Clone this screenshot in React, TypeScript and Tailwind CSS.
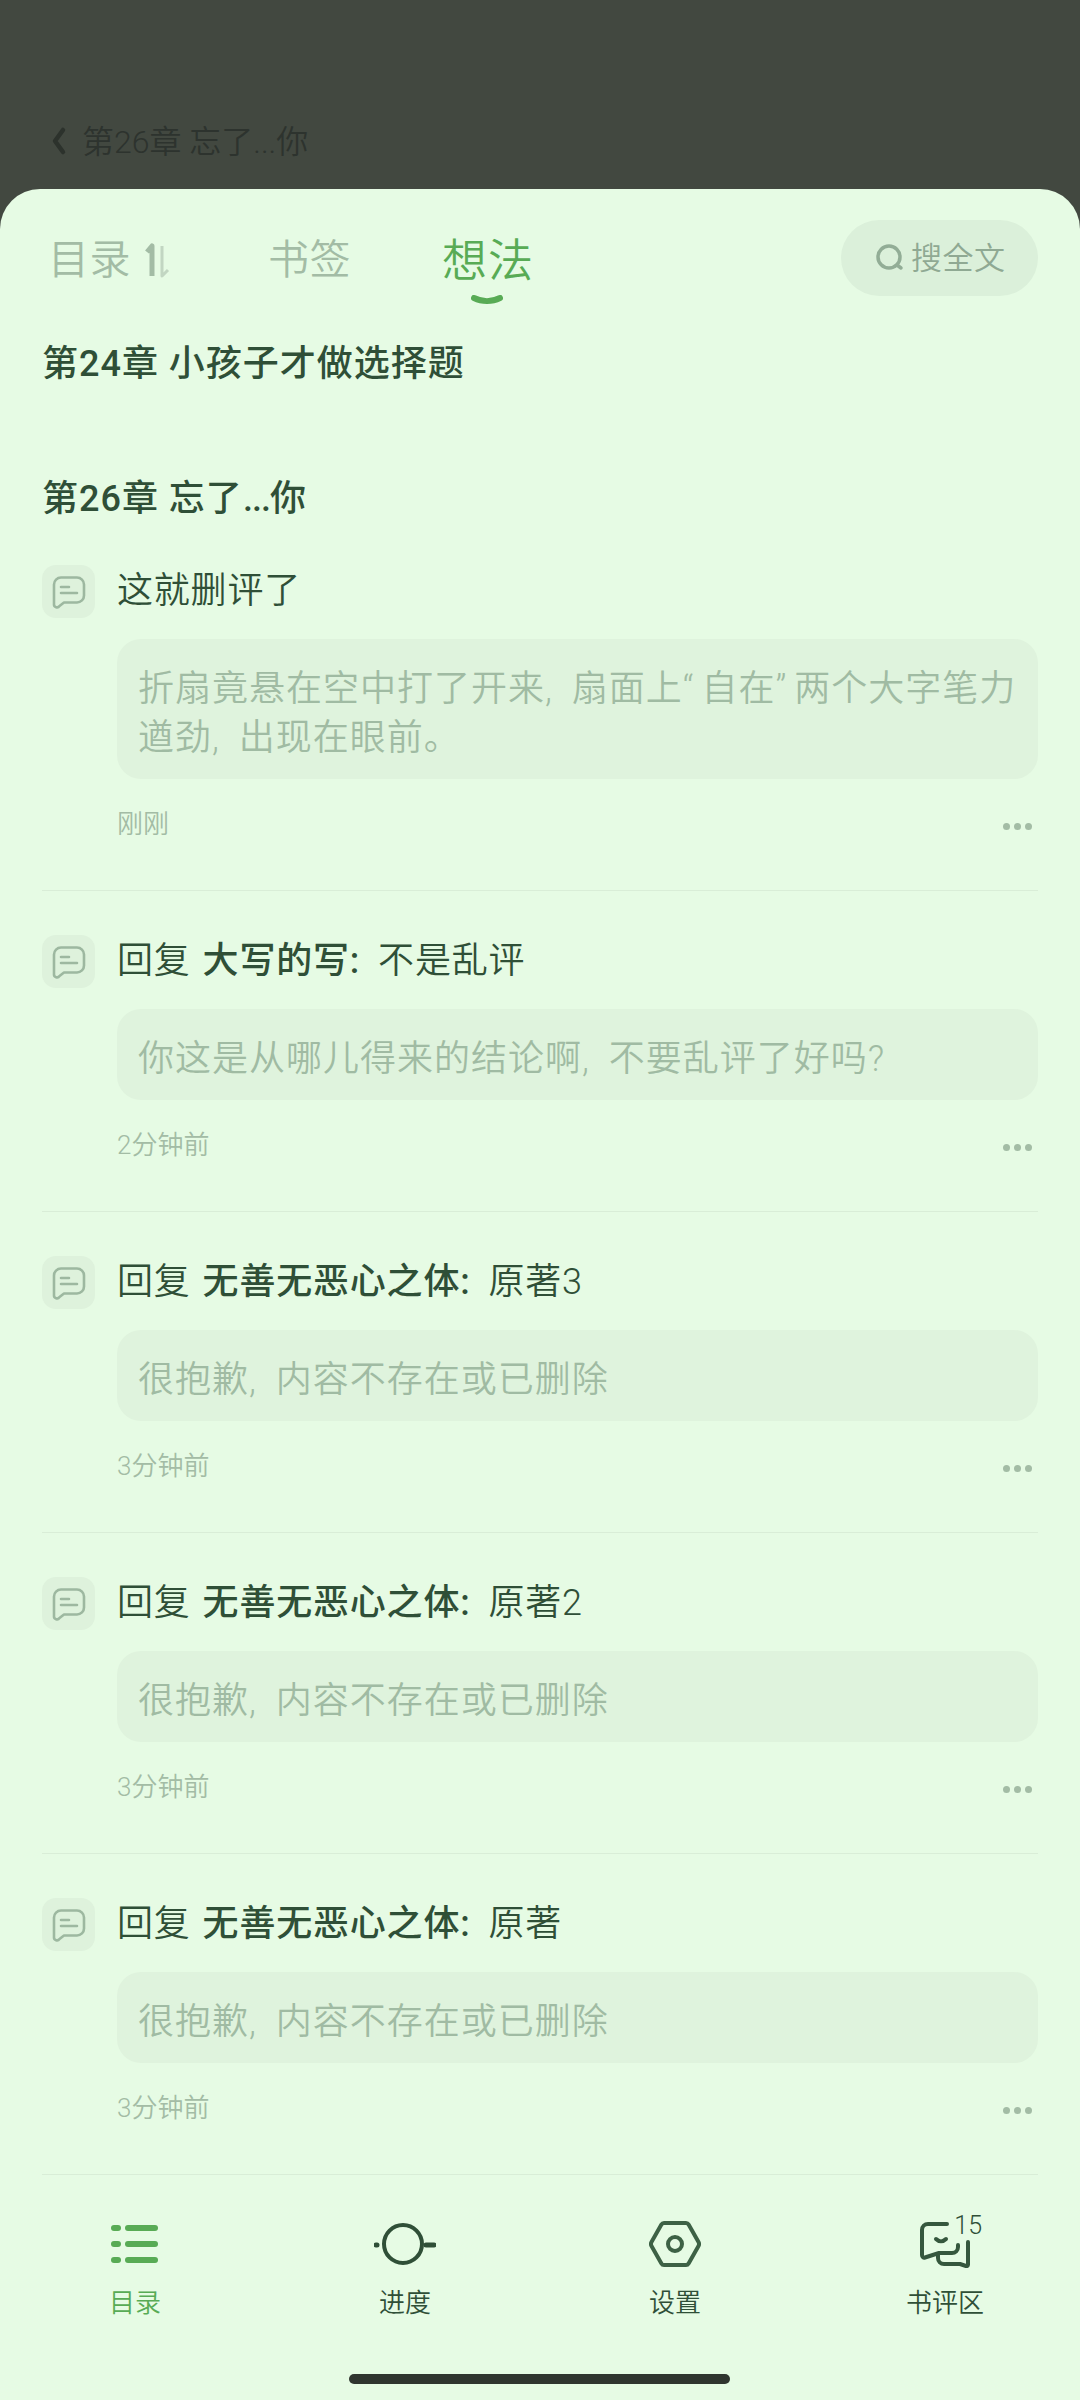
import type { ReactNode } from 'react';

const FONT = 'Roboto, "Noto Sans CJK SC", "Noto Sans", sans-serif';

function NoteIcon() {
  return (
    <div className="w-[53px] h-[53px] rounded-[14px] bg-[#def2dc] flex items-center justify-center shrink-0">
      <svg width="34" height="34" viewBox="0 0 34 34" fill="none" stroke="#9db8a0" strokeWidth="2.6" strokeLinecap="round" strokeLinejoin="round">
        <path d="M9 2.500h16a7 7 0 0 1 7 7v11a7 7 0 0 1-7 7H12l-4.500 3.500a3 3 0 0 1-5.500-1.800V9.500a7 7 0 0 1 7-7z" />
        <path d="M9 12h8M9 18h16" />
      </svg>
    </div>
  );
}

function Dots() {
  return (
    <div className="flex gap-[4px] mr-[6px] mt-[4px]">
      <span className="w-[7px] h-[7px] rounded-full bg-[#a3bca5]" />
      <span className="w-[7px] h-[7px] rounded-full bg-[#a3bca5]" />
      <span className="w-[7px] h-[7px] rounded-full bg-[#a3bca5]" />
    </div>
  );
}

type Item = { who?: string; tail: string; quote: ReactNode[]; time: string };

const items: Item[] = [
  {
    tail: '这就删评了',
    quote: [
      <>
        折扇竟悬在空中打了开来, 扇面上<span className="tracking-[8px]">“</span>自在<span className="tracking-[8px]">”</span>两个大字笔力
      </>,
      '遒劲, 出现在眼前。',
    ],
    time: '刚刚',
  },
  { who: '大写的写', tail: '不是乱评', quote: ['你这是从哪儿得来的结论啊, 不要乱评了好吗?'], time: '2分钟前' },
  { who: '无善无恶心之体', tail: '原著3', quote: ['很抱歉, 内容不存在或已删除'], time: '3分钟前' },
  { who: '无善无恶心之体', tail: '原著2', quote: ['很抱歉, 内容不存在或已删除'], time: '3分钟前' },
  { who: '无善无恶心之体', tail: '原著', quote: ['很抱歉, 内容不存在或已删除'], time: '3分钟前' },
];

function Row({ item }: { item: Item }) {
  return (
    <div className="flex gap-[22px] pt-[44px] pb-[51px] border-b border-[#d9edd7]">
      <NoteIcon />
      <div className="flex-1 min-w-0">
        <div className="h-[53px] pb-[2px] flex items-center text-[36px] font-[350] text-[#2f4f37] whitespace-nowrap tracking-[0.8px]">
          {item.who ? (
            <>
              <span>回复</span>
              <span className="font-medium ml-[12px]">{item.who}:</span>
              <span className="ml-[18px]">{item.tail}</span>
            </>
          ) : (
            <span>{item.tail}</span>
          )}
        </div>
        <div className="mt-[21px] bg-[#dff3dd] rounded-[24px] px-[21px] pt-[26px] pb-[16px] text-[36px] font-[350] leading-[49px] text-[#a0bba3] tracking-[1px] [word-spacing:9px] whitespace-nowrap">
          {item.quote.map((l, i) => (
            <div key={i}>{l}</div>
          ))}
        </div>
        <div className="mt-[30px] h-[30px] flex items-center justify-between text-[26px] font-[350] text-[#a3bca5]">
          <span>{item.time}</span>
          <Dots />
        </div>
      </div>
    </div>
  );
}

function NavItem({ label, active, children }: { label: string; active?: boolean; children: ReactNode }) {
  return (
    <div className="flex-1 flex flex-col items-center">
      <div className="h-[60px] w-[80px] flex items-center justify-center relative">{children}</div>
      <div className={`mt-[11px] text-[26px] leading-[36px] font-[350] ${active ? 'text-[#58ab55]' : 'text-[#2f4f37]'}`}>{label}</div>
    </div>
  );
}

export default function App() {
  return (
    <div className="w-[1080px] h-[2400px] bg-[#424840] overflow-hidden flex flex-col" style={{ fontFamily: FONT }}>
      <div className="h-[189px] shrink-0 flex items-start pl-[49px] pt-[118px]">
        <svg width="20" height="32" viewBox="0 0 20 32" fill="none" stroke="#2c322c" strokeWidth="4.500" strokeLinecap="round" strokeLinejoin="round" className="mt-[7px] mr-[13px]">
          <path d="M14 5L6 16l8 11" />
        </svg>
        <span className="text-[32px] leading-[48px] font-[350] text-[#2d332e]">第26章 忘了...你</span>
      </div>

      <div className="flex-1 bg-[#e6fbe4] rounded-t-[40px] flex flex-col min-h-0">
        <div className="h-[107px] shrink-0 mt-[15px] flex items-center pl-[48px] pr-[42px] relative">
          <div className="flex items-center w-[220px] mt-[7px]">
            <span className="text-[41px] font-[350] text-[#a3bca5] tracking-[0.5px]">目录</span>
            <svg width="30" height="36" viewBox="0 0 30 36" fill="none" className="ml-[13px]">
              <path d="M3 9l5-6v30" stroke="#a3bca5" strokeWidth="5" strokeLinejoin="round" />
              <path d="M18 3v30l6-6" stroke="#c2d6c2" strokeWidth="3" strokeLinejoin="round" />
            </svg>
          </div>
          <span className="text-[41px] font-[350] text-[#a3bca5] tracking-[0.5px] mt-[7px]">书签</span>
          <div className="ml-[91px] relative mt-[8px]">
            <span className="text-[45px] font-[350] text-[#58ab55] tracking-[1px]">想法</span>
            <svg width="32" height="12" viewBox="0 0 32 12" className="absolute left-[29px] top-[67px]" fill="none">
              <path d="M3 3c8 4 18 4 26 0" stroke="#58ab55" strokeWidth="6" strokeLinecap="round" />
            </svg>
          </div>
          <div className="ml-auto w-[197px] h-[76px] rounded-full bg-[#dbf0da] flex items-center pl-[34px]">
            <svg width="30" height="30" viewBox="0 0 30 30" fill="none" stroke="#92ad96" strokeWidth="3.500" strokeLinecap="round">
              <circle cx="14" cy="14" r="11" />
              <path d="M22 22l4 3" />
            </svg>
            <span className="ml-[6px] mt-[3px] text-[31px] font-[350] text-[#8fa993] tracking-[0.5px]">搜全文</span>
          </div>
        </div>

        <div className="px-[42px] flex-1 min-h-0">
          <div className="h-[50px] mt-[28px] flex items-center text-[36px] font-medium text-[#2f4f37] tracking-[1px] whitespace-pre">第24章 小孩子才做选择题</div>
          <div className="h-[50px] mt-[85px] flex items-center text-[36px] font-medium text-[#2f4f37] tracking-[1px] whitespace-pre">
            第26章 忘了<span className="tracking-[-1px]">...</span>你
          </div>
          <div className="-mt-[3px]">
            {items.map((it, i) => (
              <Row key={i} item={it} />
            ))}
          </div>
        </div>

        <div className="h-[228px] shrink-0 relative pt-[42px]">
          <div className="flex">
            <NavItem label="目录" active>
              <svg width="48" height="40" viewBox="0 0 48 40" fill="#58ab55">
                <rect x="0" y="1" width="10" height="6" rx="3" />
                <rect x="14" y="1" width="33" height="6" rx="3" />
                <rect x="0" y="17" width="10" height="6" rx="3" />
                <rect x="14" y="17" width="33" height="6" rx="3" />
                <rect x="0" y="33" width="10" height="6" rx="3" />
                <rect x="14" y="33" width="33" height="6" rx="3" />
              </svg>
            </NavItem>
            <NavItem label="进度">
              <svg width="62" height="44" viewBox="0 0 62 44" fill="none" stroke="#2f4f37" strokeLinecap="round">
                <circle cx="29" cy="22" r="19" strokeWidth="4" />
                <path d="M2 23h1M52 23h8" strokeWidth="5" />
              </svg>
            </NavItem>
            <NavItem label="设置">
              <svg width="52" height="48" viewBox="0 0 52 48" fill="none" stroke="#3d6145" strokeWidth="4" strokeLinejoin="round">
                <path d="M15 3h22a3 3 0 0 1 2.600 1.500L49.500 22a4 4 0 0 1 0 4L39.600 43.500A3 3 0 0 1 37 45H15a3 3 0 0 1-2.600-1.500L2.500 26a4 4 0 0 1 0-4L12.400 4.500A3 3 0 0 1 15 3z" />
                <circle cx="26" cy="24" r="7" />
              </svg>
            </NavItem>
            <NavItem label="书评区">
              <svg width="56" height="46" viewBox="0 0 56 46" fill="none" stroke="#35573d" strokeWidth="4" strokeLinecap="round" strokeLinejoin="round" className="mt-[2px]">
                <path d="M30 2H11a6 6 0 0 0-6 6v25c0 2 1.500 3 3 2.500L22 31h13a6 6 0 0 0 6-6v-2" />
                <path d="M19 17c3 3 7 3 10 0" />
                <path d="M21 32v4a6 6 0 0 0 6 6h16l6 2c1 .4 2-.4 2-1.500V20" />
              </svg>
              <span className="absolute right-[3px] top-[-3px] text-[25px] leading-[30px] font-[350] text-[#2f4f37]">15</span>
            </NavItem>
          </div>
          <div className="absolute left-[349px] bottom-[16px] w-[381px] h-[10px] rounded-full bg-[#2f352f]" />
        </div>
      </div>
    </div>
  );
}
